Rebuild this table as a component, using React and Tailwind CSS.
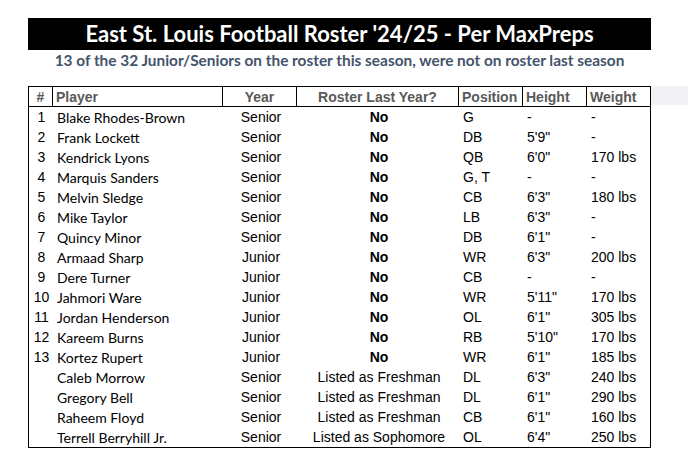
import React from 'react';

const rows = [
  ['1', 'Blake Rhodes-Brown', 'Senior', 'No', 'G', '-', '-'],
  ['2', 'Frank Lockett', 'Senior', 'No', 'DB', '5\'9"', '-'],
  ['3', 'Kendrick Lyons', 'Senior', 'No', 'QB', '6\'0"', '170 lbs'],
  ['4', 'Marquis Sanders', 'Senior', 'No', 'G, T', '-', '-'],
  ['5', 'Melvin Sledge', 'Senior', 'No', 'CB', '6\'3"', '180 lbs'],
  ['6', 'Mike Taylor', 'Senior', 'No', 'LB', '6\'3"', '-'],
  ['7', 'Quincy Minor', 'Senior', 'No', 'DB', '6\'1"', '-'],
  ['8', 'Armaad Sharp', 'Junior', 'No', 'WR', '6\'3"', '200 lbs'],
  ['9', 'Dere Turner', 'Junior', 'No', 'CB', '-', '-'],
  ['10', 'Jahmori Ware', 'Junior', 'No', 'WR', '5\'11"', '170 lbs'],
  ['11', 'Jordan Henderson', 'Junior', 'No', 'OL', '6\'1"', '305 lbs'],
  ['12', 'Kareem Burns', 'Junior', 'No', 'RB', '5\'10"', '170 lbs'],
  ['13', 'Kortez Rupert', 'Junior', 'No', 'WR', '6\'1"', '185 lbs'],
  ['', 'Caleb Morrow', 'Senior', 'Listed as Freshman', 'DL', '6\'3"', '240 lbs'],
  ['', 'Gregory Bell', 'Senior', 'Listed as Freshman', 'DL', '6\'1"', '290 lbs'],
  ['', 'Raheem Floyd', 'Senior', 'Listed as Freshman', 'CB', '6\'1"', '160 lbs'],
  ['', 'Terrell Berryhill Jr.', 'Senior', 'Listed as Sophomore', 'OL', '6\'4"', '250 lbs'],
];

const arial = "font-['Liberation_Sans',Arial,sans-serif]";
const calibri = "font-['Lato','Open_Sans',sans-serif]";

export default function App() {
  return (
    <div className="w-[689px] h-[469px] bg-white overflow-hidden pt-[18px]">
      <div className="ml-[28px] w-[623px] h-[32px] bg-black flex items-center justify-center">
        <span className={`${calibri} font-bold text-white text-[22px] leading-none`}>
          East St. Louis Football Roster '24/25 - Per MaxPreps
        </span>
      </div>
      <div className={`ml-[28px] w-[623px] h-[22px] flex items-center justify-center ${calibri} font-bold text-[15.4px] text-[#44546a]`}>
        13 of the 32 Junior/Seniors on the roster this season, were not on roster last season
      </div>

      <div className="flex items-start mt-[14px]">
        <div className="ml-[28px] w-[623px] border border-black">
          <div className={`flex h-[20px] border-b border-black ${arial} font-bold text-[14px] text-[#595959] leading-[20px]`}>
            <div className="w-[24px] border-r border-black text-center">#</div>
            <div className="w-[170px] border-r border-black pl-[3px]">Player</div>
            <div className="w-[74px] border-r border-black text-center">Year</div>
            <div className="w-[162px] border-r border-black text-center">Roster Last Year?</div>
            <div className="w-[64px] border-r border-black pl-[3px]">Position</div>
            <div className="w-[64px] border-r border-black pl-[3px]">Height</div>
            <div className="flex-1 pl-[3px]">Weight</div>
          </div>
          {rows.map((r, i) => (
            <div key={i} className="flex h-[20px] items-center text-black">
              <div className={`w-[25px] text-center ${arial} text-[14px]`}>{r[0]}</div>
              <div className={`w-[170px] pl-[3px] ${calibri} text-[14px]`}>{r[1]}</div>
              <div className={`w-[74px] text-center ${arial} text-[14px]`}>{r[2]}</div>
              <div className={`w-[162px] text-center ${arial} text-[14px] ${r[3] === 'No' ? 'font-bold' : ''}`}>{r[3]}</div>
              <div className={`w-[64px] pl-[3px] ${arial} text-[14px]`}>{r[4]}</div>
              <div className={`w-[64px] pl-[3px] ${arial} text-[14px]`}>{r[5]}</div>
              <div className={`flex-1 pl-[3px] ${arial} text-[14px]`}>{r[6]}</div>
            </div>
          ))}
        </div>
        <div className="w-[37px] h-[19px] bg-[#f2f2f4]" />
      </div>
    </div>
  );
}
